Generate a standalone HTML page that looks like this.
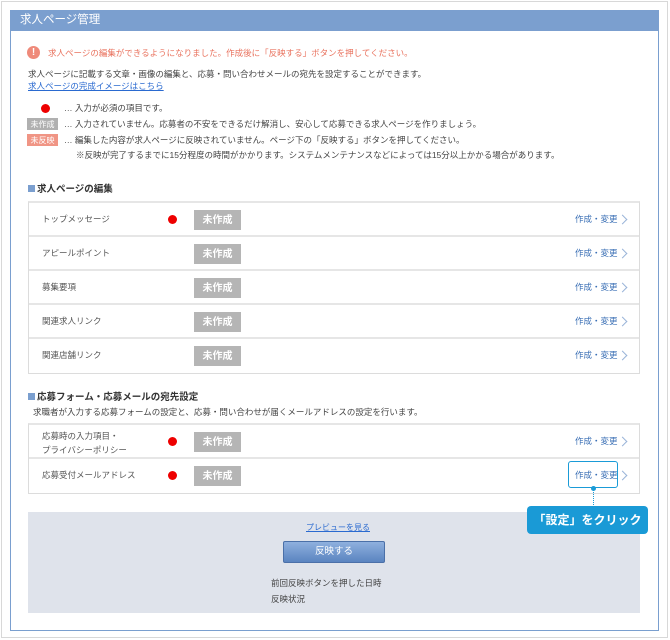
<!DOCTYPE html>
<html><head><meta charset="utf-8"><style>
*{margin:0;padding:0;box-sizing:border-box}
body{width:670px;height:640px;background:#fff;position:relative;overflow:hidden;font-family:"Liberation Sans","Noto Sans CJK JP",sans-serif;color:#444;font-size:8.5px}
.a{position:absolute;white-space:nowrap}
.frame{position:absolute;left:1px;top:1px;width:667px;height:637px;border:1px solid #d8d8d8}
.panel{position:absolute;left:10px;top:10px;width:649px;height:621px;border:1px solid #7a9fcf}
.hdr{position:absolute;left:10px;top:10px;width:649px;height:21px;background:#7b9fcf;color:#fff;font-size:11.5px;line-height:21px;padding-left:10px}
.badge{position:absolute;width:47px;height:20px;background:#b5b5b5;color:#fff;font-size:10px;font-weight:bold;text-align:center;line-height:14px;padding-top:4px}
.sb{position:absolute;height:12px;width:31px;color:#fff;font-size:8px;text-align:center;line-height:10px;padding-top:2px}
.dot{position:absolute;width:9px;height:9px;border-radius:50%;background:#e00}
.tbl{position:absolute;left:28px;width:612px;border:1px solid #dcdcdc;border-top:2px solid #e6e6e6}
.row{position:relative;height:34px;border-bottom:2px solid #e6e6e6}
.row:last-child{border-bottom:none}
.row .n{position:absolute;left:13px;top:10px;font-size:8.5px;line-height:12px;color:#555}
.row .dot{left:139px;top:12px}
.row .badge{left:165px;top:7px}
.row .e{position:absolute;left:546px;top:10px;line-height:12px;color:#3a6fb5;font-size:8.5px}
.row .c{position:absolute;left:590px;top:13px;width:7px;height:7px;border-right:1.5px solid #9ab4d8;border-top:1.5px solid #9ab4d8;transform:rotate(45deg)}
.sec{position:absolute;left:28px;font-size:9.5px;font-weight:bold;color:#333}
.sec:before{content:"";display:inline-block;width:7px;height:7px;background:#7b9fcf;margin-right:2px}
</style></head><body>
<div class="frame"></div>
<div class="panel"></div>
<div class="hdr">求人ページ管理</div>

<div class="a" style="left:27px;top:46px;width:13px;height:13px;border-radius:50%;background:#ef8a7a;color:#fff;font-size:10px;font-weight:bold;text-align:center;line-height:13px">!</div>
<div class="a" style="left:48px;top:47px;color:#e9735f;font-size:8.5px">求人ページの編集ができるようになりました。作成後に「反映する」ボタンを押してください。</div>
<div class="a" style="left:28px;top:68px">求人ページに記載する文章・画像の編集と、応募・問い合わせメールの宛先を設定することができます。</div>
<div class="a" style="left:28px;top:80px;color:#2a6ad0;text-decoration:underline">求人ページの完成イメージはこちら</div>

<div class="dot" style="left:41px;top:104px"></div>
<div class="a" style="left:64px;top:102px">… 入力が必須の項目です。</div>
<div class="sb" style="left:27px;top:118px;background:#b0b0b0">未作成</div>
<div class="a" style="left:64px;top:118px">… 入力されていません。応募者の不安をできるだけ解消し、安心して応募できる求人ページを作りましょう。</div>
<div class="sb" style="left:27px;top:134px;background:#f09585">未反映</div>
<div class="a" style="left:64px;top:134px">… 編集した内容が求人ページに反映されていません。ページ下の「反映する」ボタンを押してください。</div>
<div class="a" style="left:76px;top:149px">※反映が完了するまでに15分程度の時間がかかります。システムメンテナンスなどによっては15分以上かかる場合があります。</div>

<div class="sec" style="top:181px">求人ページの編集</div>
<div class="tbl" style="top:201px">
<div class="row"><span class="n">トップメッセージ</span><div class="dot"></div><div class="badge">未作成</div><span class="e">作成・変更</span><div class="c"></div></div>
<div class="row"><span class="n">アピールポイント</span><div class="badge">未作成</div><span class="e">作成・変更</span><div class="c"></div></div>
<div class="row"><span class="n">募集要項</span><div class="badge">未作成</div><span class="e">作成・変更</span><div class="c"></div></div>
<div class="row"><span class="n">関連求人リンク</span><div class="badge">未作成</div><span class="e">作成・変更</span><div class="c"></div></div>
<div class="row"><span class="n">関連店舗リンク</span><div class="badge">未作成</div><span class="e">作成・変更</span><div class="c"></div></div>
</div>

<div class="sec" style="top:389px">応募フォーム・応募メールの宛先設定</div>
<div class="a" style="left:33px;top:406px">求職者が入力する応募フォームの設定と、応募・問い合わせが届くメールアドレスの設定を行います。</div>
<div class="tbl" style="top:423px">
<div class="row"><span class="n" style="top:4px;line-height:14px">応募時の入力項目・<br>プライバシーポリシー</span><div class="dot"></div><div class="badge">未作成</div><span class="e">作成・変更</span><div class="c"></div></div>
<div class="row"><span class="n">応募受付メールアドレス</span><div class="dot"></div><div class="badge">未作成</div><span class="e">作成・変更</span><div class="c"></div></div>
</div>

<div class="a" style="left:28px;top:512px;width:612px;height:101px;background:#dfe3eb"></div>
<div class="a" style="left:306px;top:522px;color:#2a6ad0;text-decoration:underline;font-size:8px">プレビューを見る</div>
<div class="a" style="left:283px;top:541px;width:102px;height:22px;border:1px solid #4b70a8;border-radius:2px;background:linear-gradient(#8fb0de,#5a84c0);color:#fff;font-size:9.5px;text-align:center;line-height:20px">反映する</div>
<div class="a" style="left:271px;top:577px">前回反映ボタンを押した日時</div>
<div class="a" style="left:271px;top:593px">反映状況</div>

<div class="a" style="left:568px;top:461px;width:50px;height:27px;border:1.5px solid #1a9bd7;border-radius:3px"></div>
<div class="a" style="left:591px;top:486px;width:5px;height:5px;border-radius:50%;background:#1a9bd7"></div>
<div class="a" style="left:593px;top:490px;height:17px;border-left:1px dotted #1a9bd7"></div>
<div class="a" style="left:527px;top:506px;width:121px;height:28px;background:#1a9ad6;border-radius:4px;color:#fff;font-size:12px;font-weight:bold;text-align:center;line-height:28px">「設定」をクリック</div>
</body></html>
